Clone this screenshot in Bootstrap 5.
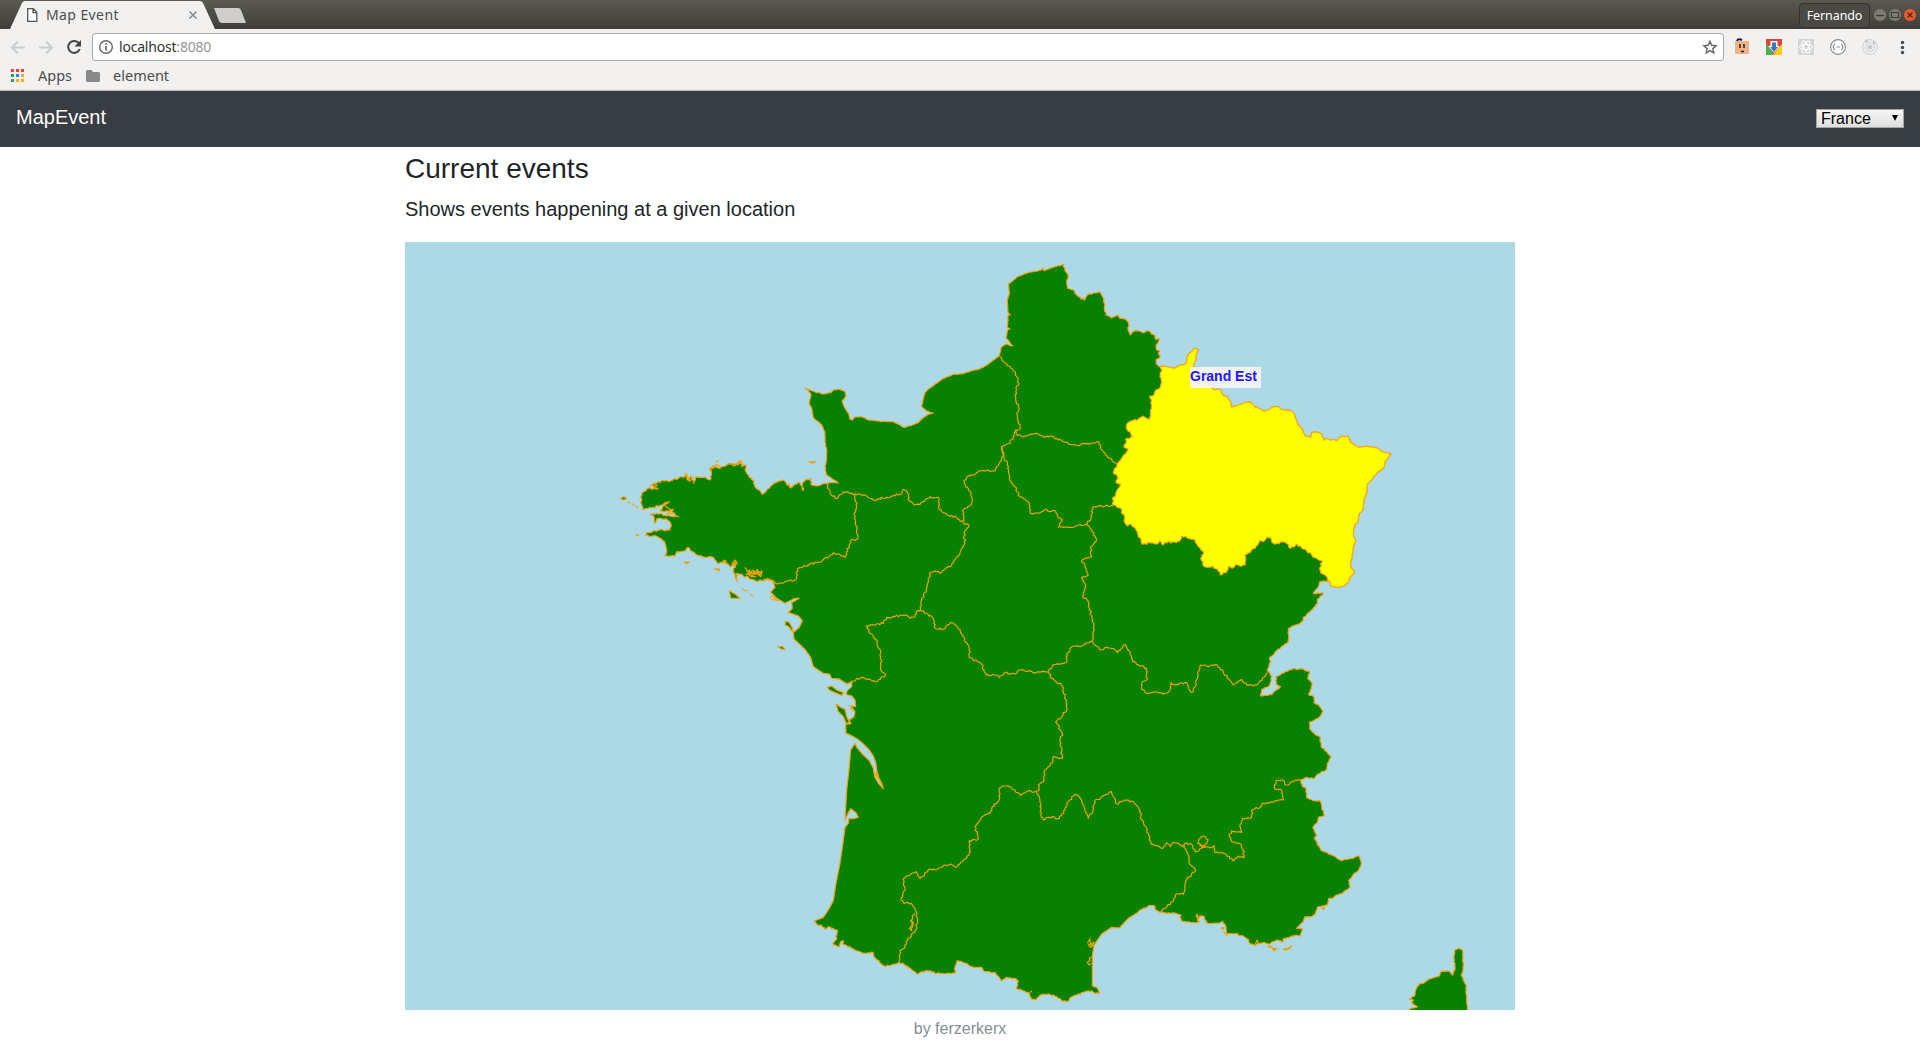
<!DOCTYPE html>
<html lang="en">
<head>
<meta charset="utf-8">
<title>Map Event</title>
<link href="https://cdn.jsdelivr.net/npm/bootstrap@5.3.0/dist/css/bootstrap.min.css" rel="stylesheet">
<style>
body{font-family:"Liberation Sans",Arial,sans-serif;color:#212529;width:1920px;height:1053px;overflow:hidden;background:#fff}
.ui-font{font-family:"Noto Sans","Open Sans",sans-serif;color:#4c4c4c;font-size:15px;line-height:1;white-space:nowrap}
.titlebar{height:29px;background:linear-gradient(#5b5a51,#3f3e39)}
.tab-strip{position:relative;width:260px;height:29px}
.tab-strip>svg{position:absolute;left:0;top:0}
.tab-text{position:relative;padding-left:46px;height:30px}
.tab-title{font-size:14px;letter-spacing:.4px}
.user-btn{width:71px;height:25px;margin-right:4px;margin-top:1px;padding-top:2px;border:1px solid #33322e;border-radius:4px;color:#fff;font-size:12.5px;letter-spacing:-.1px;background:#4a4943}
.toolbar{height:36px;background:#f2f1f0;padding-top:4px}
.omnibox{width:1632px;height:28px;border:1px solid #a9a8a7;border-radius:3px;background:#fff;padding-left:5px;padding-right:5px}
.url-text{font-size:14px;letter-spacing:-.2px;color:#333;margin-left:-1px}
.url-port{color:#959595}
.bookmarks{height:26px;background:#f2f1f0;border-bottom:1px solid #b9bbbd}
.bookmarks .ui-font{font-size:14.5px;padding-top:3px}
.app-nav{height:56px;background:#383c43;padding:8px 16px}
.app-brand{font-size:20px;line-height:30px;color:#fff;margin-top:-4px}
.country{width:88px;height:19px;border:1px solid #a5a5a5;background:linear-gradient(#f6f6f6,#dedede);font-size:16px;line-height:17px;color:#000;padding:0 4px;appearance:none;border-radius:0}
.country-wrap{position:relative;height:19px;margin-top:-1px}
.country-wrap svg{position:absolute;right:5px;top:6px}
.page-body{width:1140px;padding:5px 15px 0}
.page-body h3{font-size:28px;line-height:33.6px;margin-bottom:11px;font-weight:400}
.page-body h5{font-size:20px;line-height:24px;margin-bottom:21px;font-weight:400}
.map-box{position:relative;width:1110px;height:768px;background:#add8e6}
.map-box svg{display:block}
.region-tip{position:absolute;left:785px;top:125px;width:71px;height:21px;background:rgba(245,245,245,.9);color:#2417f0;font-weight:700;font-size:14px;line-height:18px;white-space:nowrap}
.credit{color:#868e96;font-size:16px;line-height:24px;padding-top:7px}
.land{fill:#088000;stroke:#f0a20c;stroke-width:3.6;stroke-linejoin:round}
.land-hot{fill:#ff0;stroke:#f5a623;stroke-width:3.4;stroke-linejoin:round}
.edge{fill:none;stroke:#f0a400;stroke-width:3.5;stroke-linejoin:round}
</style>
<script src="https://cdn.jsdelivr.net/npm/bootstrap@5.3.0/dist/js/bootstrap.bundle.min.js"></script>
</head>
<body>
<header>
  <div class="titlebar d-flex justify-content-between">
    <div class="tab-strip">
      <svg width="260" height="29"><path d="M10 29 22 3q1-2 3-2h175q2 0 3 2l12 26z" fill="#f2f1f0"/><path d="M214 8h24q2 0 3 2l5 13h-24q-2 0-3-2z" fill="#cfcecd"/>
        <path d="M27.700 8.700h5.600l3.500 3.700v9h-9.100zM33 8.700v4h4" fill="#fff" stroke="#555" stroke-width="1.300"/><path d="m189.500 11.500 7 7m0-7-7 7" stroke="#8b8b8b" stroke-width="1.600"/></svg>
      <div class="tab-text d-flex align-items-center"><span class="ui-font tab-title">Map Event</span></div>
    </div>
    <div class="d-flex align-items-center">
      <div class="user-btn ui-font d-flex align-items-center justify-content-center">Fernando</div>
      <svg width="46" height="29">
        <circle cx="6" cy="15" r="6" fill="#7d7c75"/><path d="M2 15.500h8" stroke="#3c3b37" stroke-width="1.300"/>
        <circle cx="21" cy="15" r="6" fill="#7d7c75"/><path d="M17.500 12.500h7v5h-7z" fill="none" stroke="#3c3b37" stroke-width="1.200"/>
        <circle cx="36" cy="15" r="6" fill="#ee5a2c"/><path d="m33.500 12.500 5 5m0-5-5 5" stroke="#4a2a1c" stroke-width="1.400"/>
      </svg>
    </div>
  </div>
  <div class="toolbar d-flex">
    <svg width="92" height="28" fill="none">
      <path d="M25 14.500H12m6-6-6 6 6 6M39 14.500h13m-6-6 6 6-6 6" stroke="#cdcccb" stroke-width="2"/>
      <path d="M79 10.300a6 6 0 1 0 .8 5.700" stroke="#444" stroke-width="2"/><path d="M81 7v6.500h-6.500z" fill="#444"/>
    </svg>
    <div class="omnibox d-flex align-items-center">
      <svg width="22" height="26" fill="none"><circle cx="8" cy="13" r="6.300" stroke="#666" stroke-width="1.400"/><path d="M8 12v4.500M8 9v1.700" stroke="#666" stroke-width="1.700"/></svg>
      <span class="ui-font url-text">localhost<span class="url-port">:8080</span></span>
      <svg class="ms-auto" width="16" height="26"><path d="m8 7.300 1.700 4 4.400.4-3.300 2.900 1 4.300L8 16.600l-3.800 2.300 1-4.300-3.300-2.900 4.400-.4z" fill="none" stroke="#666" stroke-width="1.400"/></svg>
    </div>
    <svg width="196" height="28">
      <path d="M11 8h14v13H11z" fill="#f2b184"/><path d="M13 8q1-3 5-1" stroke="#15184e" stroke-width="2" fill="none"/><path d="M16 11v4M20 11v4M17 18.500h3" stroke="#222" stroke-width="1.500"/>
      <g transform="translate(42 6)"><path d="M0 0h16v9L8 16H0z" fill="#e6403a"/><path d="M0 4v12h8z" fill="#4caf50"/><path d="M16 5v11H7z" fill="#fbd00a"/><path d="M4.500 2h7v5H14l-6 7-6-7h2.500z" fill="#fff"/><path d="M6 3.500h4V8h2l-4 5-4-5h2z" fill="#3778b8"/></g>
      <g transform="translate(74 6)" fill="none" stroke="#fff"><path d="M0 0h16v16H0z" fill="#d5d5d5" stroke="none"/><ellipse cx="8" cy="8" rx="6.500" ry="2.600"/><ellipse cx="8" cy="8" rx="6.500" ry="2.600" transform="rotate(60 8 8)"/><ellipse cx="8" cy="8" rx="6.500" ry="2.600" transform="rotate(120 8 8)"/></g>
      <circle cx="114" cy="14" r="7.400" fill="#fff" stroke="#888" stroke-width="1.100"/><path d="M111 11q-1.500 0-1.200 1.800l-.8 1.200.8 1.200Q109.500 17 111 17m6-6q1.500 0 1.200 1.800l.8 1.200-.8 1.200q.3 1.800-1.200 1.800m-4.500-3h3.400" fill="none" stroke="#888" stroke-width="1.100"/>
      <g fill="none" stroke="#ccc"><circle cx="146" cy="14" r="7.400"/><circle cx="146" cy="14" r="4.500"/><circle cx="146" cy="14" r="2" fill="#c4c4c4"/><circle cx="142.500" cy="8" r="1.300" fill="#bbb"/><circle cx="150" cy="9.500" r="1" fill="#bbb"/></g>
      <g fill="#4a4a4a"><circle cx="178.500" cy="9.500" r="1.700"/><circle cx="178.500" cy="14.500" r="1.700"/><circle cx="178.500" cy="19.500" r="1.700"/></g>
    </svg>
  </div>
  <div class="bookmarks d-flex">
    <svg width="38" height="25"><g><path d="M11 4h3v3h-3zM16 4h3v3h-3zM21 4h3v3h-3z" fill="#ee4238"/><path d="M11 9h3v3h-3zM11 14h3v3h-3z" fill="#34a052"/><path d="M16 9h3v3h-3z" fill="#2c84f5"/><path d="M21 9h3v3h-3zM16 14h3v3h-3zM21 14h3v3h-3z" fill="#fbb010"/></g></svg>
    <span class="ui-font">Apps</span>
    <svg width="37" height="25" class="ms-1"><path d="M10 6.500Q10 5 11.500 5h4l1.500 2h5.500Q24 7 24 8.500v7q0 1.500-1.500 1.500h-11Q10 17 10 15.500z" fill="#898989"/></svg>
    <span class="ui-font">element</span>
  </div>
</header>

<nav class="app-nav d-flex justify-content-between align-items-center">
  <div class="app-brand">MapEvent</div>
  <div class="country-wrap d-flex">
    <select class="country"><option>France</option></select>
    <svg width="8" height="8"><path d="M1 0h6L4 6z" fill="#000"/></svg>
  </div>
</nav>

<main class="page-body mx-auto">
  <h3>Current events</h3>
  <h5>Shows events happening at a given location</h5>
  <div class="map-box">
    <svg id="map" width="1110" height="768" viewBox="1215 726 3330 2304"></svg>
    <div class="region-tip">Grand Est</div>
  </div>
  <div class="credit text-center">by ferzerkerx</div>
</main>

<script>
// Map sheets: every line is recorded in the local units of one sheet.
const SHEET = {W:[1830,1110], N:[2700,750], E:[3270,990], SW:[2220,1710], SE:[3090,1680], S:[2400,2220], M:[3420,2520]};
const pts = (sheet, text) => text.trim().split(/\s+/).map(p => {
  const [x, y] = p.split(',').map(Number);
  return [x + SHEET[sheet][0], y + SHEET[sheet][1]];
});
const noise = (a, b) => { const v = Math.sin(a * 12.9898 + b * 78.233) * 43758.5453; return (v - Math.floor(v)) * 2 - 1; };
// Adds small bends to long straight runs so the lines look like surveyed borders.
function rough(list, amp) {
  const out = [];
  list.forEach((p, i) => {
    out.push(p);
    const q = list[i + 1];
    if (!q) return;
    const dx = q[0] - p[0], dy = q[1] - p[1], len = Math.hypot(dx, dy), n = Math.min(14, Math.floor(len / 5));
    for (let k = 1; k < n; k++) {
      const t = k / n, s = noise(p[0] + k * 7, p[1] + q[0]) * amp;
      out.push([p[0] + dx * t - dy / len * s, p[1] + dy * t + dx / len * s]);
    }
  });
  return out;
}
const svg = document.getElementById('map');
function draw(list, cls, closed) {
  const el = document.createElementNS('http://www.w3.org/2000/svg', 'path');
  el.setAttribute('d', 'M' + list.map(p => p[0].toFixed(1) + ' ' + p[1].toFixed(1)).join('L') + (closed ? 'Z' : ''));
  el.setAttribute('class', cls);
  svg.appendChild(el);
}

const belgium = rough(pts('N', '491,43 495,62 505,78 500,95 503,115 520,120 535,140 553,150 562,135 580,129 597,125 612,147 613,170 618,195 635,204 655,195 660,205 678,208 686,222 685,242 691,255 700,244 718,243 728,248 745,242 755,253 765,257 767,268 779,267 768,285 770,300 779,302 775,310 781,320 768,330 768,340 778,350'), 2);
const rhine = rough(pts('E', '210,110 225,108 250,115 268,107 291,98 292,78 303,66 313,54 326,59 318,75 316,92 310,108 325,125 345,150 370,178 392,180 402,198 412,200 421,213 425,232 445,225 462,218 480,215 492,228 512,238 522,244 535,240 545,231 560,229 575,238 600,240 612,250 618,268 625,285 638,300 645,318 662,322 664,307 680,306 697,315 700,332 708,326 740,332 757,318 775,318 780,335 805,352 830,348 855,352 880,366 903,372 885,395 880,415 860,430 848,448 832,462 830,490 822,510 818,540 808,550 805,570 792,592 790,618 797,632 790,650 784,690 780,705 793,728 778,745 775,757 763,768 735,772 722,768 718,752'), 1.8);
const alps = rough(pts('SE', '892,64 870,64 866,78 850,100 880,100 862,118 862,130 840,155 820,172 818,185 800,195 775,205 775,245 740,272 718,296 722,305 712,330 725,350 718,378 695,388 692,408 725,404 732,395 752,380 738,372 738,352 755,340 785,328 815,327 839,335 833,355 847,372 836,405 852,410 852,428 865,435 879,455 868,472 838,487 840,508 855,523 870,530 873,560 890,575 903,590 892,610 890,628 865,642 850,656 830,652 812,660 817,680 828,685 830,712 850,722 872,724 875,745 884,765 865,772 860,790 848,803 860,825 853,835 872,870 905,885 935,902 965,895 988,888 994,912'), 1.6);
const riviera = rough(pts('M', '655,92 640,103 626,122 630,142 610,157 585,168 578,175 566,175 563,195 548,197 532,202 525,222 515,230 495,230 490,245 470,265 487,265 480,288 465,286 430,296 427,306 413,300 398,305 390,312 375,308 355,310 345,316 330,312 325,298 310,288 298,288 290,280 260,280 258,262 248,244 235,250 202,250 190,228 178,228 172,240 178,245 165,248 125,243 120,232 123,225 108,220 62,217 45,208 45,198 30,196 0,210'), 1.6);
const lion = pts('S', '1010,520 985,535 958,564 935,562 905,582 882,615 877,650 877,737');
const pyrenees = rough(pts('S', '877,737 890,742 898,760 885,760 875,752 850,757 830,765 812,772 808,782 788,784 770,770 745,762 720,765 705,780 695,778 688,760 665,750 650,746 655,725 650,718 620,712 603,722 590,705 585,697 552,695 545,682 515,680 500,670 472,662 465,680 465,700 405,700 400,695 380,692 350,702 335,690 322,678 297,667 285,672 255,680 232,660 222,650 220,638 185,638 155,625 128,612 130,602 122,605 118,620 98,612 108,600 112,570 100,566 88,560 75,568 65,556 50,553 43,543'), 2);
const landes = pts('S', '70,532 85,510 100,482 108,430 120,370 128,315 135,262 145,250 147,235 160,236 175,232 168,218 152,206 143,222 135,240 140,150 148,80 152,30 165,10');
const gironde = pts('SW', '350,532 370,555 388,572 400,595 404,620 415,640 430,656 425,640 415,620 410,600 408,580 400,558 388,540 368,520 352,507 335,497 318,490 317,462 333,462 328,450 342,440 345,425 333,408 347,410 345,390 335,378 318,373 322,362 335,350 335,336 322,342 310,335 298,327 275,325 268,312 250,310 220,290 212,262 195,238 162,207 160,188 178,172 187,152 175,138 145,127 157,115 155,98 178,85 165,85 135,100 110,85 92,66 105,52 98,32');
const brittany = rough(pts('W', '470,628 455,632 435,632 415,622 400,618 388,612 378,610 380,620 383,635 376,625 370,600 378,575 362,590 355,582 340,574 325,582 315,570 310,562 278,560 262,556 248,545 235,532 225,543 200,545 195,558 165,557 170,540 165,520 150,505 138,498 107,496 110,488 150,480 180,480 182,460 170,448 140,447 135,460 132,440 122,434 140,430 165,436 190,440 205,440 185,425 190,418 165,425 150,422 158,410 178,395 160,403 130,412 98,418 93,400 95,370 115,355 140,358 125,345 135,340 160,332 180,333 205,325 225,318 227,310 235,332 243,318 252,340 258,320 280,322 300,330 305,310 298,298 312,290 330,295 350,285 365,282 385,285 390,272 395,290 408,285 405,300 415,315 432,332 435,350 457,373 470,360 492,340 520,330 530,345 545,352 560,342 570,338 580,362 578,338 588,328 603,325 602,343 625,347 650,340'), 2.6);
const cotentin = rough(pts('W', '662,338 685,338 668,328 650,315 645,290 650,270 650,240 645,215 645,188 635,165 610,143 605,115 597,100 603,75 595,62 585,55 600,60 615,66 640,72 662,68 670,60 690,58 705,65 708,78 697,92 700,105 715,130 720,148 728,150 733,142 755,140 775,150 810,154 850,155 870,165 880,172 900,167 925,158 940,143 955,133 970,129 950,123 935,110 938,95 945,68 955,57 1000,25 1030,13 1060,11 1085,2'), .8);
const channel = rough(pts('N', '215,362 240,357 265,342 297,317 305,290 318,282 338,288 328,275 318,265 322,240 330,237 322,232 325,195 331,195 324,188 322,150 328,130 325,103 350,82 385,68 425,60 428,54 432,62 455,53 491,43'), .8);
draw([].concat(belgium, rhine, alps, riviera, lion, pyrenees, landes, gironde, brittany, cotentin, channel), 'land', true);

// Corsica and the small islands
draw(rough(pts('M', '806,514 808,508 832,500 815,488 820,480 808,478 825,465 828,448 838,430 850,430 865,418 895,410 905,394 925,393 938,405 945,385 942,355 945,330 957,324 967,330 970,375 965,408 978,435 980,480 982,514'), 1.5), 'land', true);
[['SW','262,352 275,348 290,360 310,368 305,376 285,368 268,360'], ['SW','288,402 302,412 315,418 320,440 328,455 320,462 310,440 295,425'],
 ['SW','135,155 147,156 157,175 160,188 146,170 136,165'], ['SW','114,230 128,230 136,238 124,237'],
 ['W','358,662 375,672 390,685 362,684'], ['W','32,385 42,380 50,386 40,390'], ['W','314,596 330,598 326,602'], ['W','222,576 238,577 230,581'], ['W','598,275 617,276 606,279'], ['W','78,493 86,495 82,497'],
 ['M','430,328 445,324 455,317 450,325 437,330'], ['M','383,320 395,322 402,332 411,326 400,326 392,318'], ['M','545,205 553,203 550,208'], ['M','244,264 252,262 249,268']
].forEach(([s, t]) => draw(pts(s, t), 'land', true));

const west = rough(pts('E', '712,752 705,735 692,728 690,712 696,692 680,685 665,675 650,662 635,655 621,642 602,655 590,640 572,636 555,643 545,636 541,622 530,622 520,635 508,633 503,645 485,660 480,668 465,675 466,705 450,708 440,703 432,712 415,710 408,728 390,734 382,718 368,708 352,712 338,703 332,685 341,672 325,650 310,628 290,622 275,618 268,634 248,636 225,637 220,645 208,634 200,642 185,638 155,642 153,628 145,622 138,600 125,583 112,588 102,572 104,560 88,533 70,525 68,508 80,485 92,463 78,458 82,440 70,428 80,405 95,385 108,370 115,358 102,352 108,340 107,327 128,320 112,300 110,283 128,272 145,268 158,258 165,262 178,268 182,245 182,220 180,198 193,193 196,183 212,168 213,150 210,130 216,122 210,110'), 3.2);
draw(rhine.concat(west), 'land-hot', true);

// Borders between the regions
[['N','297,317 320,342 345,365 357,400 348,415 347,450 358,475 350,490 355,515 361,535 346,540 352,556 380,558 408,550 430,560 450,558 490,575 528,586 560,580 597,576 602,597 630,625 650,643'],
 ['N','348,540 340,560 330,580 305,590 308,620 300,635 290,650 285,663 245,662 200,682 192,692 197,710 212,725 217,750 210,768 187,782 193,815'],
 ['N','305,590 312,625 323,640 328,685 345,710 360,740 385,755 392,790 420,788 435,778 450,785 467,783 472,798 487,810 475,832 520,832 535,825 558,823 572,808 578,772 605,768 640,767'],
 ['N','558,823 575,840 590,868 572,890 575,920 545,932 555,950 565,975 545,982 557,1005 548,1038 565,1055 577,1110 582,1120 580,1155 577,1173'],
 ['W','650,342 660,370 680,386 700,366 735,372 765,375 790,390 830,382 875,372 880,358 892,368 895,390 912,405 930,403 960,380 985,382 988,418 1010,435 1040,442 1060,458 1077,465 1062,490 1065,520 1050,550 1025,585 990,610 980,605 962,607 950,660 935,690 932,718'],
 ['W','735,372 740,410 733,435 744,505 722,512 705,562 670,548 635,575 600,582 562,597 557,630 525,635 500,642 490,635'],
 ['W','932,718 918,725 915,740 900,745 890,735 830,742 820,760 768,768 780,790 798,808 812,850 815,905 827,916 797,935 755,922 712,940'],
 ['SW','541,120 580,145 585,175 615,176 632,158 650,168 670,200 688,235 688,262 725,282 738,315 765,315 778,322 795,308 825,312 838,300 890,307 925,305'],
 ['SW','925,305 938,285 978,278 980,250 1000,228 1025,228 1057,213'],
 ['SW','925,305 935,325 965,345 975,380 981,415 965,440 947,456 967,490 960,515 967,565 940,560 937,578 912,608 910,635 895,645 898,660 890,664'],
 ['SW','890,664 860,665 842,676 815,655 795,648 777,656 778,688 755,715 750,730 730,738 705,770 715,808 688,812 692,845 680,865 648,892 632,882 610,887 585,900 570,897 540,925 528,905 490,925'],
 ['S','310,415 315,450 303,480 312,490 335,490 348,515 353,545 345,572 318,605 315,622 300,632 297,665'],
 ['S','344,520 332,542 336,555 328,565 334,572 340,550 334,542'],
 ['S','710,155 722,190 720,215 730,240 745,232 778,235 795,210 805,185 825,163 845,180 865,235 880,205 885,180 900,178 915,165 935,155 950,192 975,180 1000,185 1020,210 1025,240 1045,280 1052,312 1088,325 1100,308 1112,320 1118,308 1135,310 1153,322'],
 ['S','1153,322 1165,345 1167,370 1187,390 1157,422 1150,463 1128,462 1118,485 1080,517'],
 ['SE','463,862 465,850 485,853 495,875 520,862 545,862 553,857 555,878 585,880 608,902 625,888 642,893 640,870 630,850 605,845 598,830 605,812 635,817 630,800 638,775 665,772 668,748 690,742 695,732 750,720 760,720 752,688 733,686 740,660 758,660 765,675 780,670 795,660 812,660'],
 ['SE','520,862 503,850 510,835 520,828 535,840 525,858 508,855'],
 ['SE','187,243 212,270 225,263 250,265 262,278 285,253 300,280 308,305 350,325 350,360 335,370 335,388 350,400 380,396 400,403 418,393 422,368 440,373 470,368 483,398 490,395 512,315 535,320 557,314 580,335 600,362 610,375 635,358 650,375 680,375 712,338']
].forEach(([s, t]) => draw(rough(pts(s, t), 3), 'edge'));

// Inlets, lagoons and rocks too small to fill
[['W','405,592 412,605 420,600 418,612 430,600 436,614 442,598 446,612 456,602 452,620 440,608 425,618 410,612'], ['W','408,615 420,606 432,610 444,604 456,606 448,616 434,604 426,612 414,602 424,620 438,620'],
 ['W','362,590 375,570 382,582 370,582 378,592'], ['W','120,350 132,342 142,346 130,352 146,356'],
 ['W','300,300 312,292 306,288 320,284 334,292'], ['W','345,288 360,280 372,288 392,272 398,284'], ['W','316,275 326,271'], ['W','53,395 60,400'], ['W','66,400 74,408'], ['W','78,410 84,414'], ['W','396,656 412,664'], ['W','420,674 430,677'],
 ['W','480,684 492,676 496,690 504,692 484,688'], ['W','460,628 475,626 490,632 492,645'], ['W','536,340 542,354 550,345'], ['W','222,322 228,310 240,334 250,320'], ['W','335,580 345,570 350,578 340,580'], ['W','160,402 170,412 182,420 172,430 195,430'],
 ['S','862,608 870,595 872,612 882,606 872,622 864,612 880,618'], ['S','875,650 868,655 870,662 862,668 868,675 874,670'], ['S','690,758 696,752'], ['M','168,232 172,222 174,236 182,228 172,244'], ['M','345,312 352,300 356,312'], ['M','250,275 262,288'],
 ['SW','326,408 336,408 334,416 342,424'], ['SW','404,605 412,625 410,608 420,636 428,650'], ['SW','323,728 330,722']
].forEach(([s, t]) => draw(rough(pts(s, t), 1.5), 'edge'));
</script>
</body>
</html>
